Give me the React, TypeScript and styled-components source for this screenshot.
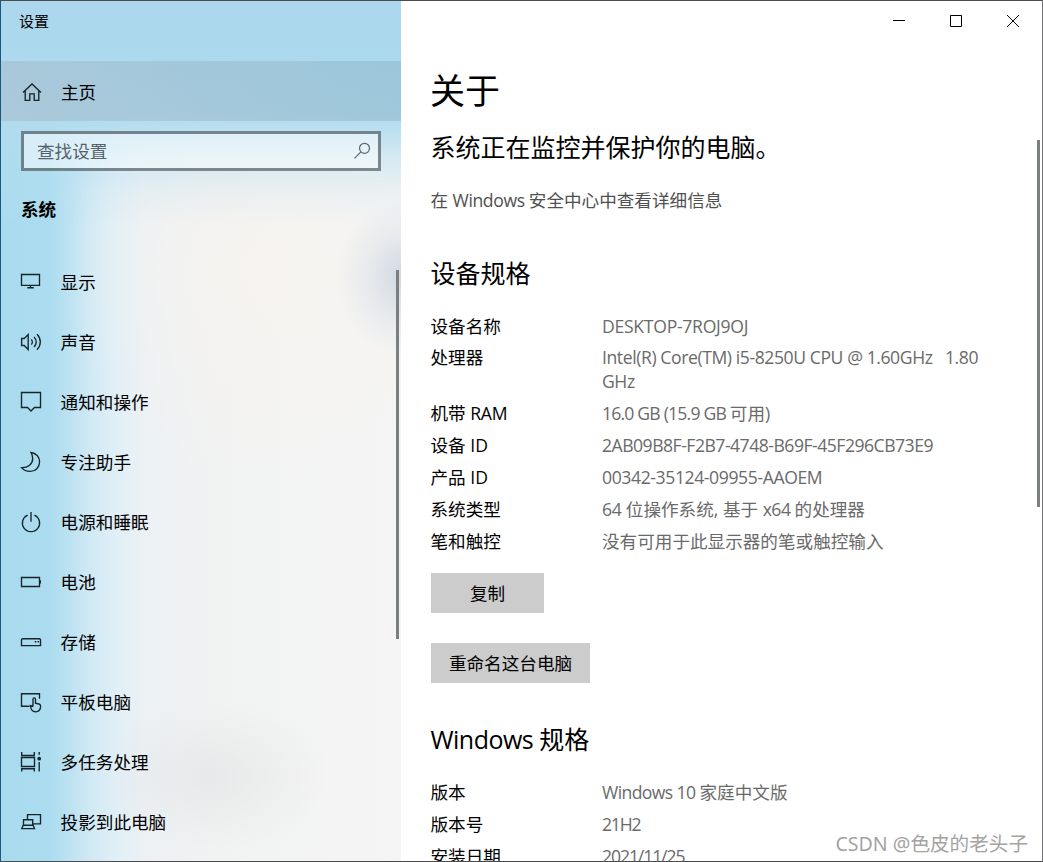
import React from 'react';
import styled, { createGlobalStyle } from 'styled-components';

const GlobalStyle = createGlobalStyle`
  * { box-sizing: border-box; }
  body {
    margin: 0;
    overflow: hidden;
    font-family: 'Open Sans', 'Noto Sans CJK SC', sans-serif;
    font-size: 17.6px;
    color: #000;
  }
`;

const Window = styled.div`
  position: relative;
  display: flex;
  width: 1043px;
  height: 862px;
  overflow: hidden;
  background: #fff;
  border: 1px solid #4c4c4e;
  border-left-color: #1b5878;
  border-right-color: #747476;
`;

const Sidebar = styled.aside`
  display: flex;
  flex: none;
  flex-direction: column;
  width: 400px;
  background:
    radial-gradient(ellipse 66px 80px at 402px 276px, rgba(200, 211, 222, 0.85), rgba(208, 217, 227, 0.4) 50%, transparent),
    linear-gradient(180deg, #acd7ee 0, #acd9ee 60px, #b0dbef 112px, rgba(178, 220, 239, 0.85) 130px, rgba(180, 221, 240, 0.45) 158px, rgba(190, 225, 241, 0.2) 190px, transparent 225px),
    radial-gradient(ellipse 120px 75px at 210px 775px, rgba(226, 226, 228, 0.6), transparent),
    radial-gradient(ellipse 210px 210px at 270px 270px, rgba(247, 243, 238, 0.75), transparent),
    linear-gradient(90deg, #a9dbef 0, #abdcf0 48px, #bce2f2 68px, #d3eaf5 92px, #e0eff7 114px, #ecf1f4 145px, #f1f2f2 210px, #f5f5f5 400px);
`;

const AppTitle = styled.div`
  height: 60px;
  padding: 9px 0 0 18px;
  font-size: 15px;
  line-height: 22px;
`;

const HomeItem = styled.div`
  display: flex;
  align-items: center;
  flex: none;
  gap: 18px;
  height: 60px;
  padding: 0 0 0 20px;
  background: linear-gradient(90deg, rgba(166, 187, 202, 0.55), rgba(134, 172, 190, 0.42));
`;

const SearchBox = styled.div`
  display: flex;
  align-items: center;
  justify-content: space-between;
  flex: none;
  width: 360px;
  height: 40px;
  margin: 10px 0 0 20px;
  padding: 0 5px 2px 13px;
  background: rgba(255, 255, 255, 0.5);
  background-clip: padding-box;
  border: 3px solid rgba(78, 88, 92, 0.68);
  color: #55626a;
`;

const GroupTitle = styled.h2`
  margin: 25px 0 0 20px;
  font-size: 17.6px;
  font-weight: 700;
  line-height: 26px;
`;

const NavBody = styled.div`
  display: flex;
  justify-content: space-between;
  padding: 30px 2px 0 0;
`;

const NavList = styled.nav`
  display: flex;
  flex-direction: column;
`;

const NavItem = styled.div`
  display: flex;
  align-items: center;
  gap: 18.6px;
  height: 60px;
  padding-left: 19px;
  line-height: 24px;
`;

const Glyph = styled.svg`
  flex: none;
  width: 22px;
  height: 22px;
  fill: none;
  stroke: #16242b;
  stroke-width: 1.35;
`;

const SearchGlyph = styled(Glyph)`
  position: relative;
  top: 1px;
  stroke: #5b676d;
  stroke-width: 1.2;
`;

const ScrollThumb = styled.div<{ $height: number; $top: number }>`
  flex: none;
  width: 3px;
  height: ${(p) => p.$height}px;
  margin-top: ${(p) => p.$top}px;
  background: #7c7f80;
`;

const Main = styled.main`
  display: flex;
  flex: 1;
  flex-direction: column;
  min-width: 0;
  background: #fff;
`;

const Caption = styled.div`
  display: flex;
  justify-content: flex-end;
  gap: 35px;
  flex: none;
  height: 60px;
  padding: 9px 18px 0 0;
`;

const CaptionGlyph = styled.svg`
  width: 22px;
  height: 22px;
  fill: none;
  stroke: #000;
  stroke-width: 1;
`;

const Scroller = styled.div`
  display: flex;
  justify-content: space-between;
  padding: 0 2px 0 30px;
`;

const Content = styled.div`
  width: 570px;
`;

const PageTitle = styled.h1`
  margin: 6px 0 0 -1px;
  font-size: 35px;
  font-weight: 400;
  line-height: 48px;
`;

const Section = styled.h2<{ $top: number }>`
  margin: ${(p) => p.$top}px 0 0 -0.6px;
  font-size: 25px;
  font-weight: 400;
  line-height: 34px;
`;

const SecurityLink = styled.div`
  margin: 24px 0 0 -0.6px;
  line-height: 24px;
  color: #505050;
`;

const Specs = styled.dl<{ $top: number; $gap: number }>`
  display: grid;
  grid-template-columns: 171px 1fr;
  row-gap: ${(p) => p.$gap}px;
  margin: ${(p) => p.$top}px 0 0;
  line-height: 24px;
`;

const Term = styled.dt`
  margin: 0 0 0 -0.5px;
`;

const Value = styled.dd`
  margin: 0;
  white-space: pre-wrap;
  color: #6a6a6a;
`;

const Run = styled.span<{ $track: number }>`
  letter-spacing: ${(p) => p.$track}px;
`;

const Button = styled.button<{ $width: number; $top: number }>`
  display: block;
  width: ${(p) => p.$width}px;
  height: 40px;
  margin-top: ${(p) => p.$top}px;
  padding: 0;
  border: 0;
  background: #ccc;
  color: #000;
  font: inherit;
`;

const Watermark = styled.div`
  position: absolute;
  right: 14px;
  bottom: 2px;
  font-family: 'Noto Sans', 'Noto Sans CJK SC', sans-serif;
  font-size: 19.6px;
  line-height: 30px;
  color: #a3a3a3;
  text-shadow: 1px 1px 0 rgba(255, 255, 255, 0.9);
`;

const navItems: { label: string; icon: React.ReactNode }[] = [
  {
    label: '显示',
    icon: <path d="M1.5 3.5h18v10.8h-18zM10.5 14.3v2.4M7.3 16.7h6.5" />,
  },
  {
    label: '声音',
    icon: (
      <path d="M1.6 7.5v7h2.6l4 4V3.6l-4 3.9zM11.2 8.4c1.5 1.5 1.5 3.7 0 5.2M14 5.9c3 2.9 3 7.3 0 10.2M17 3.3c4.4 4.4 4.4 11 0 15.4" />
    ),
  },
  {
    label: '通知和操作',
    icon: <path d="M1.5 1.5h19v15h-6L11 20l-3.5-3.5h-6z" />,
  },
  {
    label: '专注助手',
    icon: <path d="M11 1.5c5 .6 8.6 4.3 8.6 9.3 0 5.5-4 9.6-9.6 9.6-3.5 0-6.6-1.5-8.4-3.8C8 16.8 12.7 13 12.7 7.5 12.7 5.3 12.1 3.3 11 1.5z" />,
  },
  {
    label: '电源和睡眠',
    icon: <path d="M7.6 4.2a8.6 8.6 0 1 0 6.8 0M11 1v9.8" />,
  },
  {
    label: '电池',
    icon: <path d="M1.5 6.5h18v9h-18zM20.3 9.2v3.4" />,
  },
  {
    label: '存储',
    icon: (
      <>
        <path d="M1.5 14.6V8.6l.9-.9h17.200l.9.9v6z" />
        <path d="M14.700 10.700h1.600M17.500 10.700h1.600" />
      </>
    ),
  },
  {
    label: '平板电脑',
    icon: (
      <>
        <path d="M9.500 15.200h-8V2.700h18v5" />
        <path d="M13 15.500V8.200c0-1.800 2.500-1.800 2.500 0v4l3.500.8c1.100.3 1.600 1 1.600 2.100 0 3.500-1.700 5.700-4.900 5.700-3.300 0-5.200-2.400-5.200-6.200l2.500 1" />
      </>
    ),
  },
  {
    label: '多任务处理',
    icon: (
      <>
        <path d="M1.500 6.500h13v9h-13zM1.700 1v3.500h12.600V1M1.700 20.500v-2.800h12.600v2.800M19.200 1v2.800M19.200 11v9.500" />
        <circle cx="19.200" cy="7.700" r="1.200" fill="#16242b" />
      </>
    ),
  },
  {
    label: '投影到此电脑',
    icon: <path d="M7.500 8.500V3.600h13v9.200h-7.800M3.500 14.200V8.700h9.200v5.500M1.800 17.600l1.400-3.400h10l1.300 3.400z" />,
  },
];

const deviceSpecs: [React.ReactNode, React.ReactNode][] = [
  ['设备名称', <Run $track={-0.28}>DESKTOP-7ROJ9OJ</Run>],
  ['处理器', <Run $track={-0.42}>{'Intel(R) Core(TM) i5-8250U CPU @ 1.60GHz   1.80 GHz'}</Run>],
  [<>机带 <Run $track={-0.3}>RAM</Run></>, <><Run $track={-0.8}>16.0 GB (15.9 GB </Run>可用)</>],
  ['设备 ID', <Run $track={-0.5}>2AB09B8F-F2B7-4748-B69F-45F296CB73E9</Run>],
  ['产品 ID', <Run $track={-0.4}>00342-35124-09955-AAOEM</Run>],
  ['系统类型', <><Run $track={-0.3}>64 </Run>位操作系统, 基于 <Run $track={-0.5}>x64 </Run>的处理器</>],
  ['笔和触控', '没有可用于此显示器的笔或触控输入'],
];

const windowsSpecs: [React.ReactNode, React.ReactNode][] = [
  ['版本', <><Run $track={-0.6}>Windows 10 </Run>家庭中文版</>],
  ['版本号', <Run $track={-1.2}>21H2</Run>],
  ['安装日期', <Run $track={-1.1}>2021/11/25</Run>],
];

function SpecTable({ rows, top, gap }: { rows: [React.ReactNode, React.ReactNode][]; top: number; gap: number }) {
  return (
    <Specs $top={top} $gap={gap}>
      {rows.map(([term, value], i) => (
        <React.Fragment key={i}>
          <Term>{term}</Term>
          <Value>{value}</Value>
        </React.Fragment>
      ))}
    </Specs>
  );
}

export default function App() {
  return (
    <>
      <GlobalStyle />
      <Window>
        <Sidebar>
          <AppTitle>设置</AppTitle>
          <HomeItem>
            <Glyph viewBox="0 0 22 22">
              <path d="M2 12.500L11 4l9 8.500M4.200 10.600v9.700h4.600v-6.500h4.400v6.500h4.600v-9.700" />
            </Glyph>
            主页
          </HomeItem>
          <SearchBox>
            查找设置
            <SearchGlyph viewBox="0 0 22 22">
              <circle cx="13.500" cy="8.300" r="5" />
              <path d="M9.900 11.900L3.500 18.300" />
            </SearchGlyph>
          </SearchBox>
          <GroupTitle>系统</GroupTitle>
          <NavBody>
            <NavList>
              {navItems.map((item) => (
                <NavItem key={item.label}>
                  <Glyph viewBox="0 0 22 22">{item.icon}</Glyph>
                  {item.label}
                </NavItem>
              ))}
            </NavList>
            <ScrollThumb $height={369} $top={18} />
          </NavBody>
        </Sidebar>
        <Main>
          <Caption>
            <CaptionGlyph viewBox="0 0 22 22"><path d="M5 10.500h12" /></CaptionGlyph>
            <CaptionGlyph viewBox="0 0 22 22"><path d="M5.500 5.500h11v11h-11z" /></CaptionGlyph>
            <CaptionGlyph viewBox="0 0 22 22"><path d="M5 5l12 12M17 5L5 17" /></CaptionGlyph>
          </Caption>
          <Scroller>
            <Content>
              <PageTitle>关于</PageTitle>
              <Section as="h3" $top={15}>系统正在监控并保护你的电脑。</Section>
              <SecurityLink>在 <Run $track={-0.4}>Windows </Run>安全中心中查看详细信息</SecurityLink>
              <Section $top={44}>设备规格</Section>
              <SpecTable rows={deviceSpecs} top={23.6} gap={7.9} />
              <Button $width={113} $top={20}>复制</Button>
              <Button $width={159} $top={30}>重命名这台电脑</Button>
              <Section $top={39}><Run $track={-0.5}>Windows </Run>规格</Section>
              <SpecTable rows={windowsSpecs} top={24} gap={8} />
            </Content>
            <ScrollThumb $height={367} $top={79} />
          </Scroller>
        </Main>
        <Watermark>CSDN @色皮的老头子</Watermark>
      </Window>
    </>
  );
}
